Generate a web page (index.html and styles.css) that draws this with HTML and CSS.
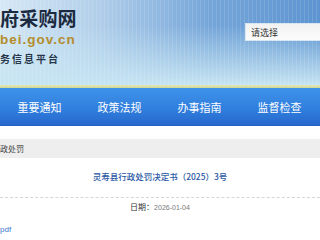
FILE: index.html
```html
<!DOCTYPE html>
<html lang="zh-CN">
  <head>
    <meta charset="UTF-8" />
    <meta name="viewport" content="width=device-width, initial-scale=1.0" />
    <title>灵寿县行政处罚决定书</title>
    <link rel="stylesheet" href="styles.css">
  </head>
  <body>
    <header class="top">
      <div class="logo">
        <div class="logo-name">府采购网</div>
        <div class="logo-url">bei.gov.cn</div>
        <div class="logo-sub">务信息平台</div>
      </div>
      <div class="search">
        <span class="search-select">请选择</span>
      </div>
    </header>
    <div class="top-line"></div>
    <nav class="nav">
      <a class="nav-item" href="#">重要通知</a>
      <a class="nav-item" href="#">政策法规</a>
      <a class="nav-item" href="#">办事指南</a>
      <a class="nav-item" href="#">监督检查</a>
    </nav>
    <div class="crumb">政处罚</div>
    <div class="article">
      <h1 class="article-title">灵寿县行政处罚决定书（2025）3号</h1>
      <div class="article-meta"><span class="meta-label">日期：</span>2026-01-04</div>
      <a class="attach" href="#">pdf</a>
    </div>
  </body>
</html>
```

FILE: styles.css
```css
/* 基础样式重置 */
* {
  margin: 0;
  padding: 0;
  box-sizing: border-box;
}

body {
  font-family: "Liberation Sans", "Noto Sans CJK SC", sans-serif;
  background-color: #fff;
  width: 320px;
  height: 240px;
  overflow: hidden;
}

/* 顶部 */
.top {
  height: 85px;
  display: flex;
  justify-content: space-between;
  background:
    repeating-linear-gradient(90deg, rgba(255, 255, 255, 0.12) 0 1px, transparent 1px 4px),
    linear-gradient(180deg, rgba(196, 227, 242, 0) 30%, #c6e4f2 100%),
    linear-gradient(90deg, #d6e8f5 0%, #b2cfea 30%, #76a6d9 65%, #5d94d1 100%);
}

.logo {
  padding-top: 7px;
}

.logo-name {
  font-family: "Noto Sans CJK SC", sans-serif;
  font-size: 19px;
  font-weight: 700;
  line-height: 22px;
  color: #1b2a40;
  letter-spacing: 0.2px;
}

.logo-url {
  margin-top: 3px;
  font-size: 13.5px;
  font-weight: 700;
  line-height: 16px;
  color: #b48c2c;
  letter-spacing: 1px;
}

.logo-sub {
  margin-top: 5px;
  font-family: "Noto Sans CJK SC", sans-serif;
  font-size: 10px;
  font-weight: 700;
  line-height: 12px;
  color: #26364a;
  letter-spacing: 2px;
}

.search {
  margin-top: 23px;
  width: 75px;
  height: 18px;
  background: linear-gradient(180deg, #f2f2f2, #fcfcfc);
  border: 1px solid #d8e6f2;
  border-right: none;
  padding-left: 5px;
  display: flex;
  align-items: center;
}

.search-select {
  font-family: "Noto Sans CJK SC", sans-serif;
  font-size: 9px;
  color: #333;
}

.top-line {
  height: 3px;
  background: linear-gradient(180deg, #e6e8b4, #c9d69a);
}

/* 导航 */
.nav {
  height: 38px;
  display: flex;
  background: linear-gradient(180deg, #3f93ea 0%, #2f7ddd 60%, #2768cd 100%);
  border-bottom: 1px solid #2a5fc0;
}

.nav-item {
  width: 82px;
  display: flex;
  align-items: center;
  justify-content: center;
  margin-left: -1px;
  font-family: "Noto Sans CJK SC", sans-serif;
  font-size: 11px;
  color: #fff;
  text-decoration: none;
}

/* 面包屑 */
.crumb {
  margin-top: 13px;
  height: 19px;
  line-height: 19px;
  background-color: #eeeeee;
  font-family: "Noto Sans CJK SC", sans-serif;
  font-size: 8px;
  color: #444;
}

/* 正文 */
.article {
  padding-top: 12px;
}

.article-title {
  text-align: center;
  font-family: "Noto Sans CJK SC", sans-serif;
  font-size: 8.5px;
  font-weight: 500;
  line-height: 13px;
  color: #2757a3;
  padding-bottom: 14px;
  border-bottom: 1px dashed #d6d6d6;
}

.article-meta {
  margin-top: 3px;
  text-align: center;
  font-size: 7px;
  line-height: 12px;
  color: #777;
}

.meta-label {
  font-family: "Noto Sans CJK SC", sans-serif;
  font-size: 8px;
  color: #333;
}

.attach {
  display: block;
  margin-top: 10px;
  font-size: 8px;
  line-height: 11px;
  color: #3b78cf;
  text-decoration: none;
}
```
